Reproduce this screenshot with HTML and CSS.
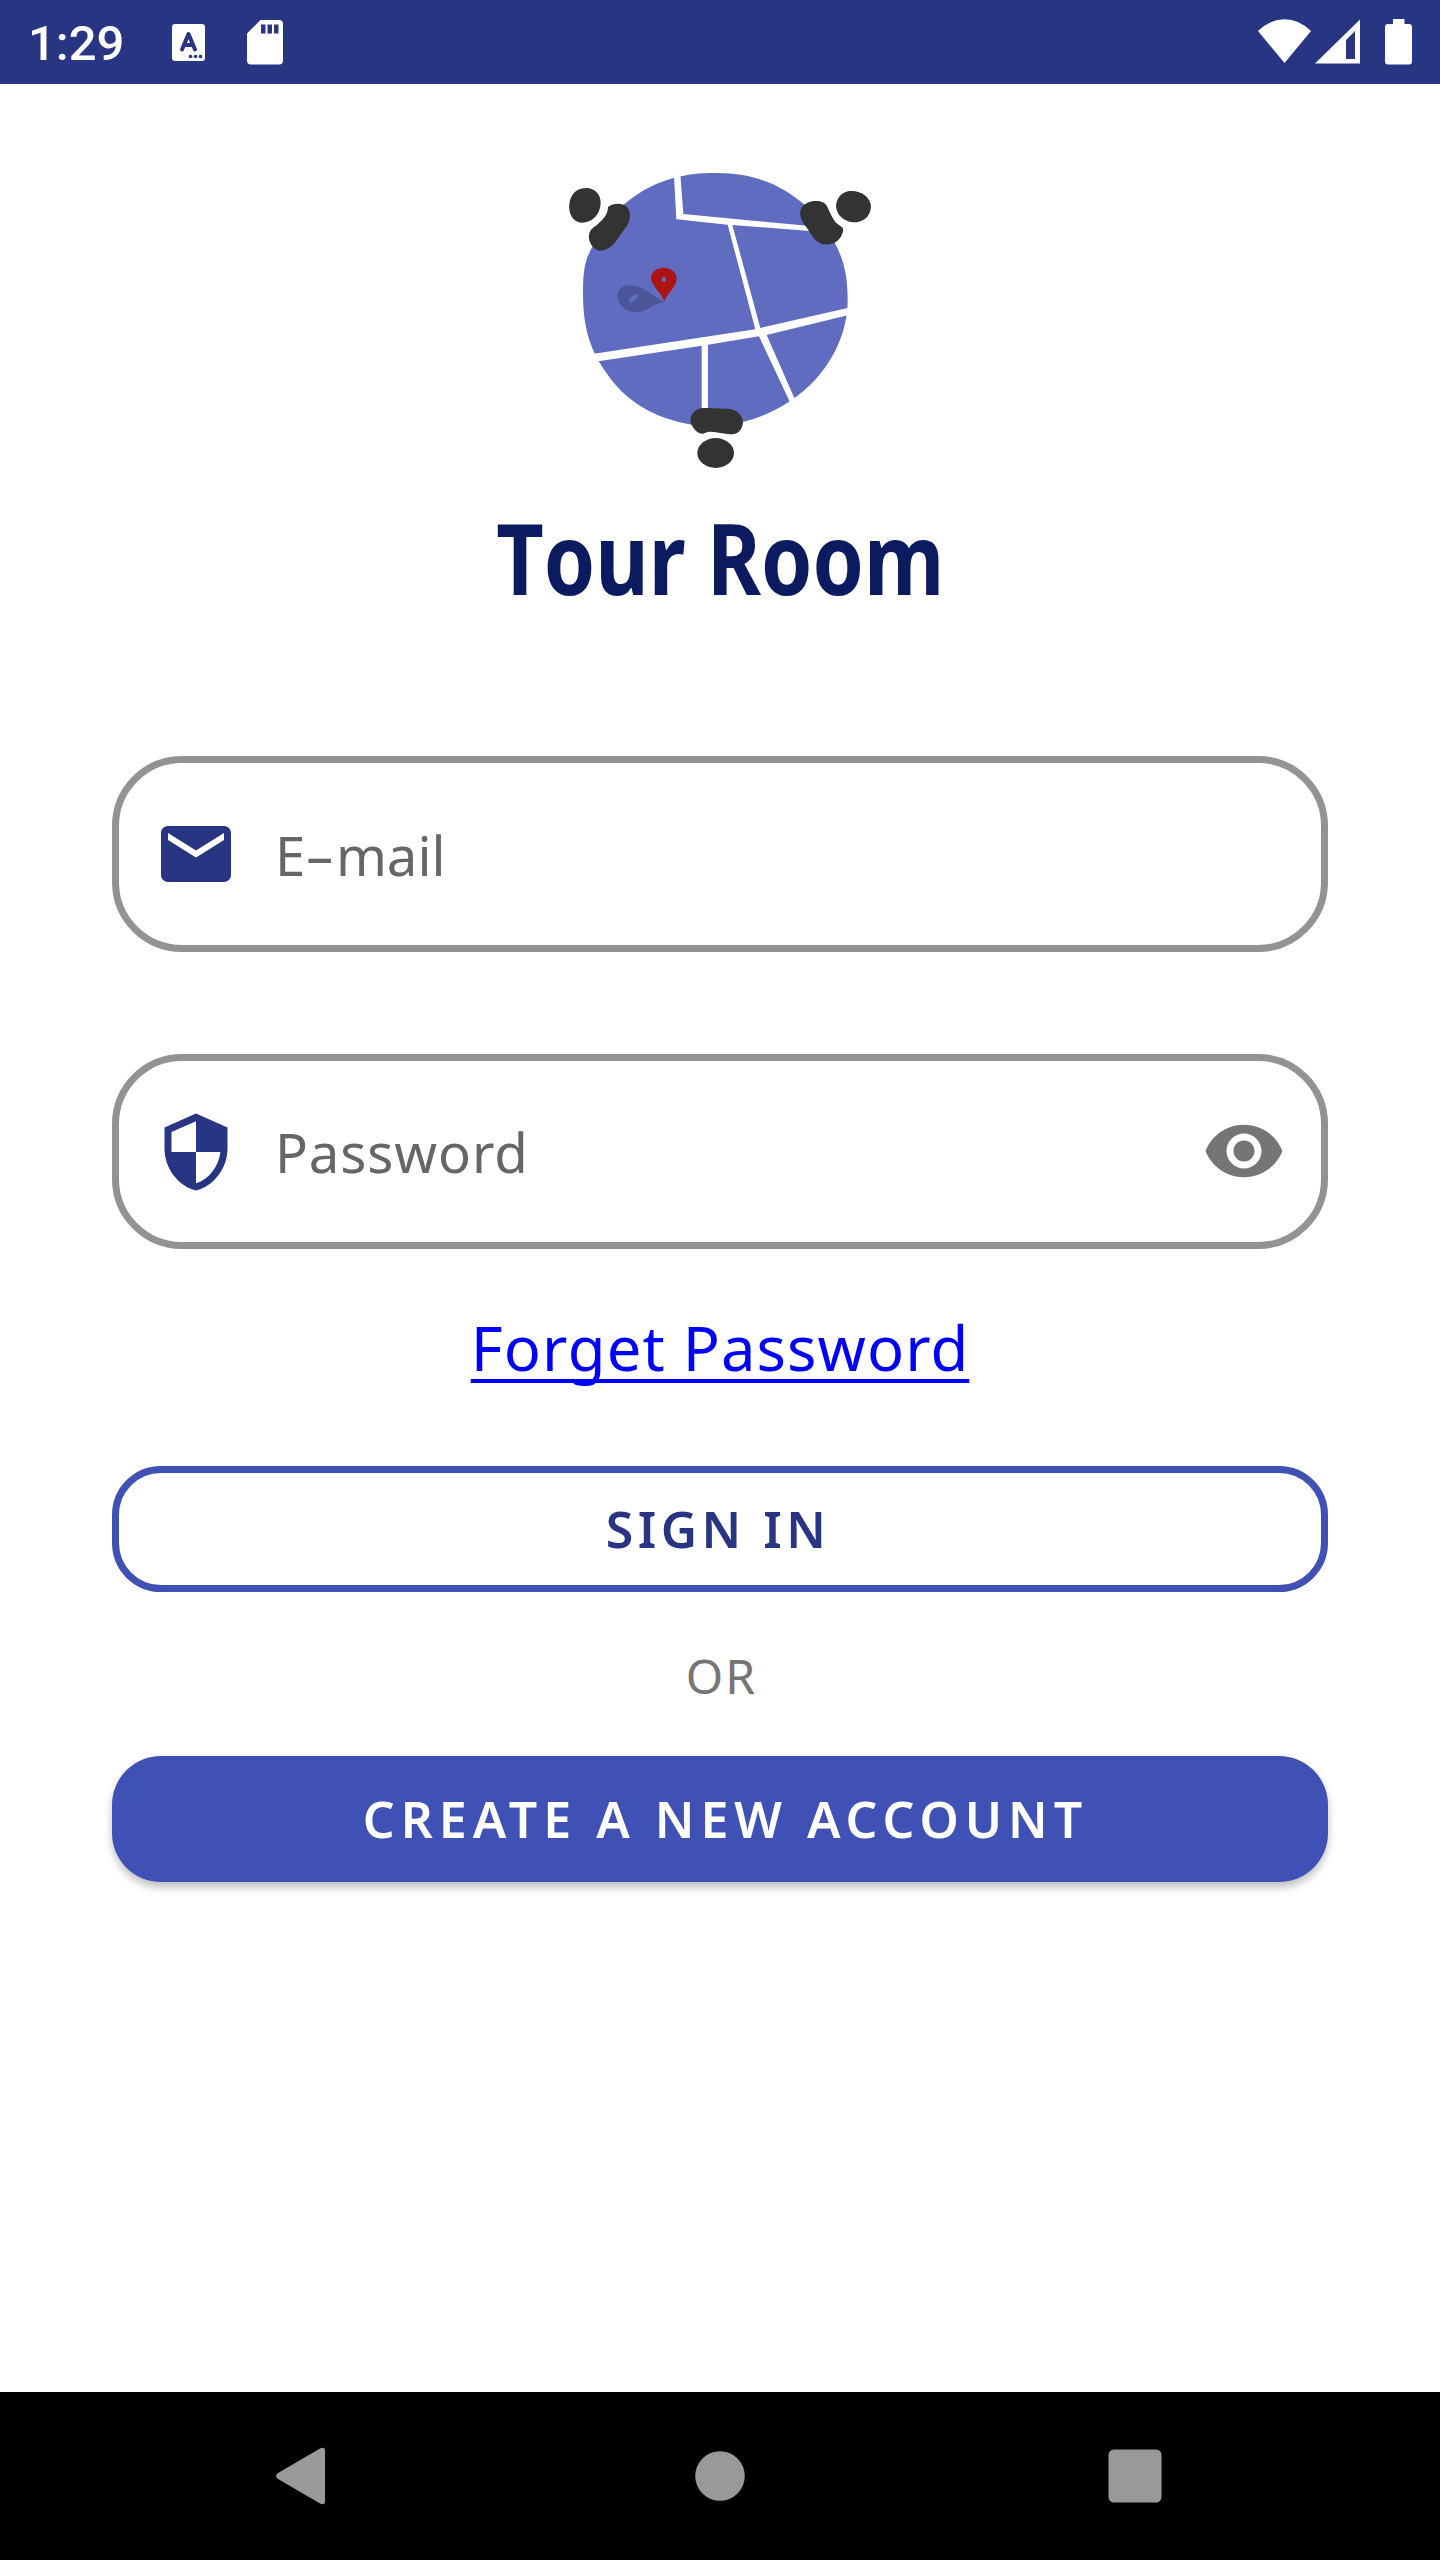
FILE: index.html
```html
<!DOCTYPE html>
<html lang="en">
<head>
<meta charset="utf-8">
<title>Tour Room</title>
<link rel="stylesheet" href="styles.css">
</head>
<body>
<header class="status">
  <span class="clock">1:29</span>
  <svg class="ic-key" width="33" height="37" viewBox="0 0 33 37"><rect width="33" height="37" rx="3" fill="#fff"/><path d="M10 25.500L16.500 10L23 25.500M12.500 21H20.500" fill="none" stroke="#283583" stroke-width="4" stroke-linecap="round" stroke-linejoin="round"/><g fill="#283583"><circle cx="18.500" cy="32.500" r="1.800"/><circle cx="23.500" cy="32.500" r="1.800"/><circle cx="28.500" cy="32.500" r="1.800"/></g></svg>
  <svg class="ic-sd" width="36" height="45" viewBox="0 0 36 45"><path fill="#fff" d="M13.500 0H32a4 4 0 0 1 4 4V40.500a4 4 0 0 1-4 4H4a4 4 0 0 1-4-4V13.500Z"/><path fill="#283583" d="M14 4.500h4.500v9H14zM20.500 4.500H25v9h-4.500zM27 4.500h4.500v9H27z"/></svg>
  <svg class="ic-right" width="154" height="46" viewBox="1258 19 154 46"><g fill="#fff"><path d="M1258 31Q1270 19.300 1284.500 19.300T1311 31L1284.500 63Z"/><path fill-rule="evenodd" d="M1360 19.500V63.500H1315ZM1355 31L1346 40V59H1355Z"/><path d="M1393 19H1404.500V24H1409a3 3 0 0 1 3 3V61.500a3 3 0 0 1-3 3H1388a3 3 0 0 1-3-3V27a3 3 0 0 1 3-3H1393Z"/></g></svg>
</header>
<main class="screen">
  <svg class="logo" width="340" height="330" viewBox="0 0 1020 990">
    <path fill="#5f6cbf" d="M496 69C620 68 700 110 764 164C810 205 835 235 855 280C885 335 893 390 893 450C893 545 850 630 795 690C735 755 650 800 575 817L425 824C310 805 225 752 170 670C115 595 99 520 99 430C99 350 108 325 127 290L222 163C275 120 320 97 372 84C410 73 450 69 496 69Z"/>
    <path fill="#fff" d="M372 80L391 74L400 192L780 228V243L547 225L631 534L896 473V495L650 555L733 744L720 757L627 559L474 584V780H455V587L145 634L132 611L616 538L533 224L379 208Z"/>
    <g fill="#333">
      <path d="M93 116C130 108 153 130 152 160C151 195 125 219 94 218C67 215 55 190 58 162C61 137 75 120 93 116Z"/>
      <path d="M175 170C190 158 222 158 233 173C245 190 240 215 228 232C215 249 207 260 198 274C185 292 165 303 147 302C125 297 112 270 118 250C123 235 133 232 143 223C160 207 173 195 174 172Z"/>
      <path d="M894 124C930 119 962 140 963 171C960 205 935 218 909 217C880 213 859 195 858 167C860 143 875 128 894 124Z"/>
      <path d="M798 153C814 153 825 157 831 169C844 195 850 216 871 228C880 233 881 239 878 248C870 275 845 286 822 283C792 277 785 252 768 230C752 210 746 194 754 175C761 161 779 153 798 153Z"/>
      <path d="M425 795C435 778 450 773 470 774L530 776C558 776 577 793 579 817C577 840 563 855 540 853L515 850C492 846 478 842 460 851C447 855 427 835 423 820C421 811 421 803 425 795Z"/>
      <ellipse cx="497" cy="909" rx="55" ry="45"/>
    </g>
    <path fill="#4a5597" fill-rule="evenodd" d="M342 457C305 462 290 487 258 487C225 485 202 462 202 437C202 412 226 404 248 406C280 409 310 440 342 457ZM238 447C245 437 257 430 265 434C268 444 254 451 245 459C238 460 235 454 238 447Z"/>
    <path fill="#ac1414" fill-rule="evenodd" d="M343 454C335 430 303 405 303 385C303 364 322 353 341 353C362 353 380 366 380 387C380 408 350 433 343 454ZM341 381C332 381 334 396 341 396C351 396 351 381 341 381Z"/>
  </svg>
  <h1 class="title"><span class="title-text">Tour Room</span></h1>
  <div class="field email">
    <svg class="icon" viewBox="0 0 24 24"><path fill="#283583" d="M20 4H4c-1.100 0-2 .9-2 2v12c0 1.100.9 2 2 2h16c1.100 0 2-.9 2-2V6c0-1.100-.9-2-2-2zm0 4l-8 5-8-5V6l8 5 8-5v2z"/></svg>
    <span class="hint hint-email">E<span class="dash">-</span>mail</span>
  </div>
  <div class="field password">
    <svg class="icon" viewBox="0 0 24 24"><path fill="#283583" d="M12 1L3 5v6c0 5.550 3.840 10.740 9 12 5.160-1.260 9-6.450 9-12V5l-9-4zm0 10.990h7c-.53 4.120-3.280 7.790-7 8.940V12H5V6.300l7-3.110v8.800z"/></svg>
    <span class="hint hint-password">Password</span>
    <svg class="icon eye" viewBox="0 0 24 24"><path fill="#757575" d="M12 4.500C7 4.500 2.730 7.610 1 12c1.730 4.390 6 7.500 11 7.500s9.270-3.110 11-7.500c-1.730-4.390-6-7.500-11-7.500zM12 17c-2.760 0-5-2.240-5-5s2.240-5 5-5 5 2.240 5 5-2.240 5-5 5zm0-8c-1.660 0-3 1.340-3 3s1.340 3 3 3 3-1.340 3-3-1.340-3-3-3z"/></svg>
  </div>
  <a class="forget" href="#">Forget Password</a>
  <button class="btn signin">SIGN IN</button>
  <div class="or">OR</div>
  <button class="btn create">CREATE A NEW ACCOUNT</button>
</main>
<nav class="nav">
  <svg width="84" height="84" viewBox="0 0 84 84"><path fill="#999" d="M17 39L59 14.500Q64 12 64 17V67Q64 72 59 69.500L17 45Q13 42 17 39Z"/></svg>
  <svg width="84" height="84" viewBox="0 0 84 84"><circle cx="42" cy="42" r="24.800" fill="#999"/></svg>
  <svg width="84" height="84" viewBox="0 0 84 84"><rect x="13.500" y="15.500" width="53" height="53" rx="5.500" fill="#999"/></svg>
</nav>
</body>
</html>
```
FILE: styles.css
```css
* { box-sizing: border-box; }
body {
  margin: 0;
  width: 1440px;
  height: 2560px;
  display: flex;
  flex-direction: column;
  background: #fff;
  font-family: "Noto Sans", "Open Sans", sans-serif;
}
svg { display: block; flex: none; }
.status {
  height: 84px;
  background: #283583;
  display: flex;
  align-items: flex-start;
  padding-left: 28px;
}
.clock {
  width: 144px;
  font: 500 49px/84px Roboto, sans-serif;
  color: #fff;
  padding-top: 2px;
}
.ic-key { margin-top: 24px; }
.ic-sd { margin: 20px 0 0 42px; }
.ic-right { margin: 19px 28px 0 auto; }
.screen {
  flex: 1;
  display: flex;
  flex-direction: column;
  align-items: center;
  padding-top: 66px;
}
.title {
  margin: 7px 0 2px;
  height: 140px;
  line-height: 140px;
  font-size: 99px;
  font-weight: 700;
  color: #0c1a60;
  font-kerning: none;
}
.title-text {
  display: inline-block;
  white-space: nowrap;
  transform: scaleX(.832);
}
.field {
  width: 1216px;
  height: 196px;
  border: 7px solid #939393;
  border-radius: 70px;
  display: flex;
  align-items: center;
  padding: 0 35px;
}
.email { margin-top: 127px; }
.password { margin-top: 102px; height: 195px; }
.icon { width: 84px; height: 84px; }
.eye { margin-bottom: 2px; }
.hint {
  flex: 1;
  margin-left: 37px;
  font-size: 54.500px;
  line-height: 80px;
  letter-spacing: .9px;
  color: #666;
}
.hint-email { padding-top: 2px; letter-spacing: 0; }
.dash { display: inline-block; transform: scaleX(1.700); margin: 0 7px 0 6px; }
.forget {
  margin-top: 48px;
  height: 103px;
  font-size: 61.500px;
  line-height: 100px;
  letter-spacing: 1.050px;
  color: #00f;
  text-decoration: underline;
  text-decoration-thickness: 4px;
  text-underline-offset: 8px;
  text-decoration-skip-ink: none;
}
.btn {
  width: 1216px;
  height: 126px;
  border-radius: 49px;
  font-family: inherit;
  font-size: 50px;
  font-weight: 600;
  line-height: 70px;
}
.signin {
  margin-top: 66px;
  padding: 0 4px 0 0;
  border: 7px solid #3f51b5;
  background: #fff;
  color: #283583;
  letter-spacing: 4.500px;
}
.or {
  margin-top: 49px;
  padding-left: 3px;
  height: 70px;
  line-height: 70px;
  font-size: 48px;
  letter-spacing: 2px;
  color: #757575;
}
.create {
  margin-top: 45px;
  padding: 0 0 0 11px;
  border: 0;
  background: #3f51b5;
  color: #fff;
  letter-spacing: 6px;
  box-shadow: 0 5px 9px rgba(0, 0, 0, .26);
}
.nav {
  height: 168px;
  background: #000;
  display: flex;
  align-items: center;
  justify-content: center;
  gap: 333px;
}
```
